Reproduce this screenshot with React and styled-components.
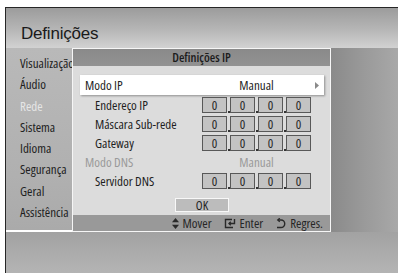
import React from "react";
import styled, { createGlobalStyle } from "styled-components";

const GlobalStyle = createGlobalStyle`
  html, body { margin: 0; padding: 0; background: #fff; }
  * { box-sizing: border-box; }
`;

const FONT = `"Open Sans", "DejaVu Sans Condensed", sans-serif`;

const Screen = styled.div`
  width: 398px;
  height: 273px;
  background: #ffffff;
  padding: 7px 0 0 5px;
  overflow: hidden;
  font-family: ${FONT};
  font-stretch: 80%;
`;

const Frame = styled.div`
  height: 266px;
  border-top: 1px solid #262626;
  border-left: 1px solid #262626;
  display: flex;
  flex-direction: column;
  overflow: hidden;
`;

const Header = styled.div`
  height: 40px;
  flex: none;
  background: linear-gradient(to bottom, #9c9c9c 0%, #b4b4b4 50%, #d2d2d2 100%);
  display: flex;
  align-items: flex-end;
  padding: 0 0 4px 15px;
`;

const PageTitle = styled.div`
  font-family: "Liberation Sans", Arial, sans-serif;
  font-stretch: normal;
  font-size: 17px;
  letter-spacing: -0.2px;
  color: #1a1a1a;
  line-height: 20px;
`;

const Main = styled.div`
  height: 184px;
  flex: none;
  display: flex;
`;

const Sidebar = styled.div`
  width: 66px;
  flex: none;
  height: 182px;
  overflow: hidden;
  background: linear-gradient(to bottom, #b9b9b9 0%, #b0b0b0 70%, #aaaaaa 100%);
  padding-top: 5px;
  display: flex;
  flex-direction: column;
`;

const MenuItem = styled.div`
  height: 21.3px;
  line-height: 21.3px;
  padding-left: 14px;
  font-size: 13px;
  font-weight: 500;
  white-space: nowrap;
  color: ${(p) => (p.$active ? "#e6e6e6" : "#1e1e1e")};
`;

const RightFill = styled.div`
  flex: 1;
  background: linear-gradient(to right, #8a8a8a 0%, #9a9a9a 50%, #a8a8a8 100%);
`;

const Dialog = styled.div`
  width: 259px;
  flex: none;
  border: 1px solid #f6f6f6;
  display: flex;
  flex-direction: column;
`;

const TitleBar = styled.div`
  height: 17px;
  flex: none;
  background: linear-gradient(to bottom, #8a8a8a, #929292);
  display: flex;
  align-items: center;
  justify-content: center;
  font-size: 12.5px;
  font-weight: 600;
  color: #1c1c1c;
`;

const Body = styled.div`
  flex: 1;
  background: #dcdcdc;
  padding: 9px 6px 0 7px;
  display: flex;
  flex-direction: column;
`;

const Row = styled.div`
  display: grid;
  grid-template-columns: 122px 109px 1fr;
  align-items: center;
  height: ${(p) => (p.$selected ? "20px" : "19px")};
  background: ${(p) => (p.$selected ? "#ffffff" : "transparent")};
  box-shadow: ${(p) => (p.$selected ? "1px 1px 2px rgba(0,0,0,0.35)" : "none")};
`;

const Label = styled.div`
  font-size: 13px;
  font-weight: 500;
  white-space: nowrap;
  padding-left: ${(p) => (p.$indent ? "15px" : "5px")};
  color: ${(p) => (p.$disabled ? "#9a9a9a" : "#1e1e1e")};
`;

const Value = styled.div`
  font-size: 13px;
  font-weight: 500;
  text-align: center;
  color: ${(p) => (p.$disabled ? "#9a9a9a" : "#1e1e1e")};
`;

const Arrow = styled.div`
  display: flex;
  justify-content: flex-end;
  padding-right: 5px;
`;

const Octets = styled.div`
  display: flex;
  height: 16px;
`;

const Octet = styled.div`
  width: 25px;
  height: 16px;
  border: 1px solid #585858;
  background: #c3c3c3;
  font-size: 13px;
  font-weight: 500;
  color: #262626;
  display: flex;
  align-items: center;
  justify-content: center;
`;

const Dot = styled.div`
  width: 3px;
  display: flex;
  align-items: flex-end;
  justify-content: center;
  &::before {
    content: "";
    width: 2px;
    height: 2px;
    background: #333;
  }
`;

const ButtonRow = styled.div`
  display: flex;
  justify-content: center;
  margin-top: 8px;
`;

const OkButton = styled.div`
  width: 54px;
  height: 14px;
  border: 1px solid #f8f8f8;
  background: #bcbcbc;
  font-size: 12.5px;
  font-weight: 500;
  color: #1e1e1e;
  display: flex;
  align-items: center;
  justify-content: center;
`;

const Footer = styled.div`
  height: 16px;
  flex: none;
  background: #999999;
  display: flex;
  align-items: center;
  justify-content: flex-end;
  padding-right: 7px;
  gap: 12px;
`;

const Hint = styled.div`
  display: flex;
  align-items: center;
  gap: 4px;
  font-size: 13px;
  font-weight: 500;
  color: #262626;
`;

const Bottom = styled.div`
  flex: 1;
  background: linear-gradient(to bottom, #a2a2a2 0%, #adadad 60%, #b4b4b4 100%);
`;

const menu = ["Visualização", "Áudio", "Rede", "Sistema", "Idioma", "Segurança", "Geral", "Assistência"];

const IpField = () => (
  <Octets>
    <Octet>0</Octet>
    <Dot />
    <Octet>0</Octet>
    <Dot />
    <Octet>0</Octet>
    <Dot />
    <Octet>0</Octet>
  </Octets>
);

const UpDownIcon = () => (
  <svg width="7" height="11" viewBox="0 0 7 11">
    <path d="M3.5 0 L7 4.2 H0 Z" fill="#2a2a2a" />
    <path d="M3.5 11 L7 6.8 H0 Z" fill="#2a2a2a" />
  </svg>
);

const EnterIcon = () => (
  <svg width="12" height="11" viewBox="0 0 12 11" fill="none" stroke="#2a2a2a" strokeWidth="1.4">
    <path d="M8 1.5 H1.5 V9.5 H9" />
    <path d="M10.5 1 V5.5 H5" />
    <path d="M6.8 3.7 L5 5.5 L6.8 7.3" />
  </svg>
);

const ReturnIcon = () => (
  <svg width="11" height="11" viewBox="0 0 11 11" fill="none" stroke="#2a2a2a" strokeWidth="1.4">
    <path d="M3 2 H6 A3.6 3.6 0 0 1 6 9.5 H2" />
    <path d="M4.8 0.3 L2.8 2 L4.8 3.7" />
  </svg>
);

const ChevronIcon = () => (
  <svg width="4" height="7" viewBox="0 0 4 7">
    <path d="M0 0 L4 3.5 L0 7 Z" fill="#8a8a8a" />
  </svg>
);

export default function App() {
  return (
    <>
      <GlobalStyle />
      <Screen>
        <Frame>
          <Header>
            <PageTitle>Definições</PageTitle>
          </Header>
          <Main>
            <Sidebar>
              {menu.map((m) => (
                <MenuItem key={m} $active={m === "Rede"}>
                  {m}
                </MenuItem>
              ))}
            </Sidebar>
            <Dialog>
              <TitleBar>Definições IP</TitleBar>
              <Body>
                <Row $selected>
                  <Label>Modo IP</Label>
                  <Value>Manual</Value>
                  <Arrow>
                    <ChevronIcon />
                  </Arrow>
                </Row>
                <Row>
                  <Label $indent>Endereço IP</Label>
                  <IpField />
                </Row>
                <Row>
                  <Label $indent>Máscara Sub-rede</Label>
                  <IpField />
                </Row>
                <Row>
                  <Label $indent>Gateway</Label>
                  <IpField />
                </Row>
                <Row>
                  <Label $disabled>Modo DNS</Label>
                  <Value $disabled>Manual</Value>
                </Row>
                <Row>
                  <Label $indent>Servidor DNS</Label>
                  <IpField />
                </Row>
                <ButtonRow>
                  <OkButton>OK</OkButton>
                </ButtonRow>
              </Body>
              <Footer>
                <Hint>
                  <UpDownIcon />
                  Mover
                </Hint>
                <Hint>
                  <EnterIcon />
                  Enter
                </Hint>
                <Hint>
                  <ReturnIcon />
                  Regres.
                </Hint>
              </Footer>
            </Dialog>
            <RightFill />
          </Main>
          <Bottom />
        </Frame>
      </Screen>
    </>
  );
}
